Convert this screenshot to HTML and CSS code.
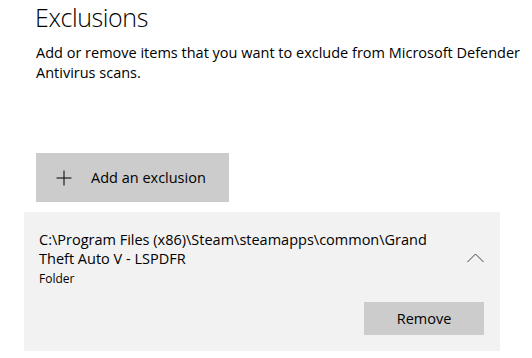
FILE: index.html
```html
<!DOCTYPE html>
<html lang="en">
<head>
  <meta charset="UTF-8">
  <meta name="viewport" content="width=device-width, initial-scale=1.0">
  <title>Exclusions</title>
  <link rel="stylesheet" href="styles.css">
</head>
<body>
  <div class="page">
    <h1 class="title">Exclusions</h1>
    <p class="intro">Add or remove items that you want to exclude from Microsoft Defender Antivirus scans.</p>

    <!-- Add an exclusion -->
    <button class="add-button">
      <svg class="plus" width="16" height="16" viewBox="0 0 16 16">
        <path d="M8 0.5V15.5M0.5 8H15.5" stroke="#000" stroke-width="1" fill="none"/>
      </svg>
      <span>Add an exclusion</span>
    </button>

    <!-- Exclusion item -->
    <div class="item">
      <div class="item-head">
        <div class="item-info">
          <div class="item-path">C:\Program Files (x86)\Steam\steamapps\common\Grand<br>Theft Auto V - LSPDFR</div>
          <div class="item-type">Folder</div>
        </div>
        <svg class="chevron" width="17" height="10" viewBox="0 0 17 10">
          <path d="M0.5 9L8.5 1L16.5 9" stroke="#444" stroke-width="1" fill="none"/>
        </svg>
      </div>
      <div class="item-actions">
        <button class="remove-button">Remove</button>
      </div>
    </div>
  </div>
</body>
</html>
```

FILE: styles.css
```css
body {
  margin: 0;
  background: #fff;
  color: #000;
  font-family: "Open Sans", "Noto Sans", sans-serif;
}
.page {
  display: flex;
  flex-direction: column;
  align-items: flex-start;
  padding-top: 2px;
}
.title {
  margin: 0 0 0 35px;
  font-size: 25px;
  font-weight: 300;
  letter-spacing: -0.4px;
  line-height: 30px;
}
.intro {
  margin: 11px 0 0 36px;
  width: 490px;
  font-size: 14.5px;
  line-height: 20px;
}
.add-button {
  display: flex;
  align-items: center;
  gap: 19px;
  margin: 70px 0 0 36px;
  padding: 0 0 0 20px;
  width: 193px;
  height: 49px;
  background: #cccccc;
  border: none;
  font-family: inherit;
  font-size: 14.5px;
  color: #000;
}
.plus {
  flex: none;
}
.item {
  margin: 10px 0 0 24px;
  width: 476px;
  box-sizing: border-box;
  padding: 18px 16px 16px 15px;
  background: #f2f2f2;
}
.item-head {
  display: flex;
  align-items: center;
  justify-content: space-between;
}
.item-path {
  white-space: nowrap;
  font-size: 14.5px;
  line-height: 19px;
}
.item-type {
  margin-top: 3px;
  font-size: 12px;
  line-height: 16px;
}
.chevron {
  flex: none;
  margin-top: -2px;
}
.item-actions {
  display: flex;
  justify-content: flex-end;
  margin-top: 15px;
}
.remove-button {
  width: 120px;
  height: 33px;
  background: #cccccc;
  border: none;
  font-family: inherit;
  font-size: 14.5px;
  color: #000;
}
```
